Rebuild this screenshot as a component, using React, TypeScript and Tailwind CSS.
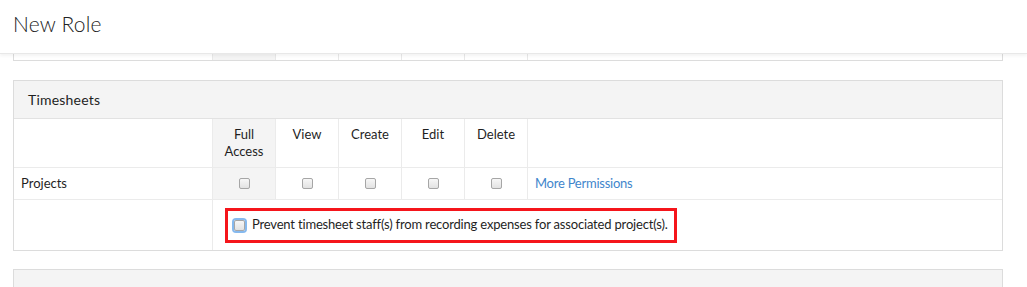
import React from "react";

const Box = ({ focus = false }: { focus?: boolean }) => (
  <span
    className={
      "inline-block shrink-0 w-[11px] h-[11px] rounded-[2px] border border-[#a6a6a6] bg-gradient-to-b from-[#f7f7f7] to-[#e2e2e2] align-middle " +
      (focus ? "ring-2 ring-[#86b9ee] border-[#9a9a9a]" : "")
    }
  />
);

const cols = ["Full\nAccess", "View", "Create", "Edit", "Delete"];

export default function App() {
  return (
    <div
      className="w-[1027px] h-[287px] overflow-hidden bg-white text-[#1f1f1f]"
      style={{ fontFamily: "Lato, 'Open Sans', Arial, sans-serif" }}
    >
      <div className="relative z-10 h-[54px] bg-white border-b border-[#e8e8e8] shadow-[0_2px_3px_rgba(0,0,0,0.05)] flex items-center pl-[13px] pb-[6px]">
        <h1 className="text-[21px] font-light text-[#222] tracking-[0.2px]">New Role</h1>
      </div>
      <div className="ml-[13px] mr-[24px]">
        <div className="h-[7px] border-x border-b border-[#dcdcdc] grid grid-cols-[199px_63px_63px_63px_63px_63px_1fr]">
          <div className="border-r border-[#e8e8e8]" />
          <div className="border-r border-[#e8e8e8] bg-[#f4f4f4]" />
          <div className="border-r border-[#e8e8e8]" />
          <div className="border-r border-[#e8e8e8]" />
          <div className="border-r border-[#e8e8e8]" />
          <div className="border-r border-[#e8e8e8]" />
          <div />
        </div>

        <div className="mt-[19px] border border-[#dcdcdc]">
          <div className="h-[38px] bg-[#f4f4f4] border-b border-[#e2e2e2] flex items-center pl-[14px] text-[14px] tracking-[0.2px]">
            Timesheets
          </div>
          <div className="grid grid-cols-[199px_63px_63px_63px_63px_63px_1fr] text-[13px]">
            <div className="h-[49px] border-r border-b border-[#ebebeb]" />
            {cols.map((c, i) => (
              <div
                key={c}
                className={
                  "h-[49px] border-r border-b border-[#ebebeb] pt-[7px] text-center leading-[17px] whitespace-pre-line " +
                  (i === 0 ? "bg-[#f4f4f4]" : "")
                }
              >
                {c}
              </div>
            ))}
            <div className="h-[49px] border-b border-[#ebebeb]" />

            <div className="h-[32px] border-r border-b border-[#ebebeb] flex items-center pl-[7px]">Projects</div>
            {cols.map((c, i) => (
              <div
                key={c}
                className={
                  "h-[32px] border-r border-b border-[#ebebeb] flex items-center justify-center " +
                  (i === 0 ? "bg-[#f4f4f4]" : "")
                }
              >
                <Box />
              </div>
            ))}
            <div className="h-[32px] border-b border-[#ebebeb] flex items-center pl-[7px] text-[#3f86cc] tracking-[-0.25px]">
              More Permissions
            </div>

            <div className="h-[50px] border-r border-[#ebebeb]" />
            <div className="col-span-6 h-[50px] flex items-center pl-[12px]">
              <div className="h-[35px] border-[3px] border-[#f5151b] flex items-center pl-[6px] pr-[6px] gap-[7px]">
                <Box focus />
                <span className="tracking-[-0.18px]">
                  Prevent timesheet staff(s) from recording expenses for associated project(s).
                </span>
              </div>
            </div>
          </div>
        </div>

        <div className="mt-[18px] h-[40px] border border-[#dcdcdc] bg-[#f4f4f4]" />
      </div>
    </div>
  );
}
